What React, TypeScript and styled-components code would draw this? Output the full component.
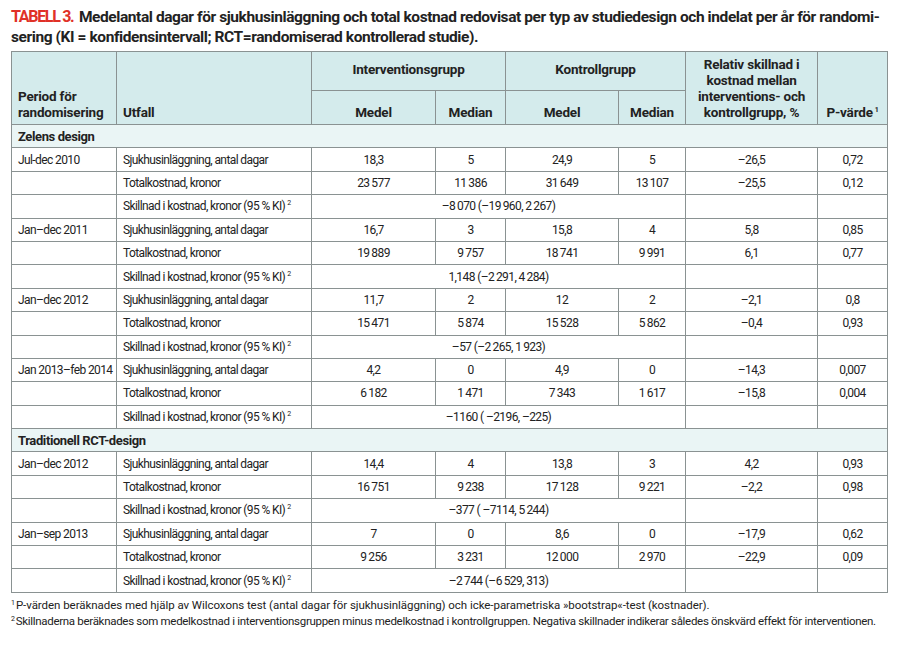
import React from 'react';
import styled, { createGlobalStyle } from 'styled-components';

const GlobalStyle = createGlobalStyle`
  body {
    margin: 0;
    background: #ffffff;
    font-family: Roboto, "Liberation Sans", sans-serif;
    color: #222;
  }
`;

const Page = styled("div")({
  width: 900,
  height: 652,
  padding: "7px 13px 0 11px",
  boxSizing: "border-box",
  overflow: "hidden",
});

const Caption = styled("div")({
  fontSize: 15.5,
  lineHeight: "20px",
  fontWeight: 700,
  letterSpacing: -0.42,
  color: "#222",
});

const CaptionLine = styled("div")({
  whiteSpace: "nowrap",
});

const Label = styled("span")({
  color: "#e03127",
  fontSize: 16,
  fontWeight: 700,
  letterSpacing: -1.3,
  marginRight: 2,
});

const Table = styled("table")({
  marginTop: 4,
  width: 876,
  borderCollapse: "collapse",
  tableLayout: "fixed",
  fontSize: 12,
  letterSpacing: -0.6,
  "& td, & th": {
    border: "1px solid #8a9292",
  },
});

const HeadCell = styled("th")<{ $align?: "left" | "center"; $valign?: "bottom" | "middle" }>(
  ({ $align = "center", $valign = "bottom" }) => ({
    background: "#d4ebec",
    fontWeight: 700,
    fontSize: 13.5,
    lineHeight: "16px",
    textAlign: $align,
    verticalAlign: $valign,
    padding: "0 6px 4px",
    letterSpacing: -0.2,
  })
);

const SectionCell = styled("td")({
  background: "#eaf5f5",
  fontWeight: 700,
  fontSize: 13,
  height: 22.4,
  padding: "0 6px",
  letterSpacing: -0.4,
});

const Cell = styled("td")<{ $align?: "left" | "center" }>(({ $align = "center" }) => ({
  height: 22.4,
  padding: "0 6px",
  textAlign: $align,
  whiteSpace: "nowrap",
}));

const Sup = styled("sup")({
  fontSize: 7,
  verticalAlign: 5,
  marginLeft: 2,
});

const Notes = styled("div")({
  marginTop: 3,
  fontSize: 11.5,
  lineHeight: "14px",
  color: "#222",
});

const Note = styled("div")<{ $spacing: number }>(({ $spacing }) => ({
  letterSpacing: $spacing,
  whiteSpace: "nowrap",
}));

const NoteSup = styled("sup")({
  fontSize: 7,
  verticalAlign: 4,
  marginRight: 1,
});

type Group = {
  period: string;
  days: string[];
  cost: string[];
  diff: string;
};

const zelens: Group[] = [
  {
    period: "Jul-dec 2010",
    days: ["18,3", "5", "24,9", "5", "–26,5", "0,72"],
    cost: ["23\u2009577", "11\u2009386", "31\u2009649", "13\u2009107", "–25,5", "0,12"],
    diff: "–8\u2009070 (–19\u2009960, 2\u2009267)",
  },
  {
    period: "Jan–dec 2011",
    days: ["16,7", "3", "15,8", "4", "5,8", "0,85"],
    cost: ["19\u2009889", "9\u2009757", "18\u2009741", "9\u2009991", "6,1", "0,77"],
    diff: "1,148 (–2\u2009291, 4\u2009284)",
  },
  {
    period: "Jan–dec 2012",
    days: ["11,7", "2", "12", "2", "–2,1", "0,8"],
    cost: ["15\u2009471", "5\u2009874", "15\u2009528", "5\u2009862", "–0,4", "0,93"],
    diff: "–57 (–2\u2009265, 1\u2009923)",
  },
  {
    period: "Jan 2013–feb 2014",
    days: ["4,2", "0", "4,9", "0", "–14,3", "0,007"],
    cost: ["6\u2009182", "1\u2009471", "7\u2009343", "1\u2009617", "–15,8", "0,004"],
    diff: "–1160 ( –2196, –225)",
  },
];

const traditional: Group[] = [
  {
    period: "Jan–dec 2012",
    days: ["14,4", "4", "13,8", "3", "4,2", "0,93"],
    cost: ["16\u2009751", "9\u2009238", "17\u2009128", "9\u2009221", "–2,2", "0,98"],
    diff: "–377 ( –7114, 5\u2009244)",
  },
  {
    period: "Jan–sep 2013",
    days: ["7", "0", "8,6", "0", "–17,9", "0,62"],
    cost: ["9\u2009256", "3\u2009231", "12\u2009000", "2\u2009970", "–22,9", "0,09"],
    diff: "–2\u2009744 (–6\u2009529, 313)",
  },
];

const GroupRows: React.FC<{ group: Group }> = ({ group }) => (
  <>
    <tr>
      <Cell $align="left">{group.period}</Cell>
      <Cell $align="left">Sjukhusinläggning, antal dagar</Cell>
      {group.days.map((v, i) => (
        <Cell key={i}>{v}</Cell>
      ))}
    </tr>
    <tr>
      <Cell />
      <Cell $align="left">Totalkostnad, kronor</Cell>
      {group.cost.map((v, i) => (
        <Cell key={i}>{v}</Cell>
      ))}
    </tr>
    <tr>
      <Cell />
      <Cell $align="left">
        Skillnad i kostnad, kronor (95 % KI)<Sup>2</Sup>
      </Cell>
      <Cell colSpan={4}>{group.diff}</Cell>
      <Cell />
      <Cell />
    </tr>
  </>
);

const App: React.FC = () => (
  <Page>
    <GlobalStyle />
    <Caption>
      <CaptionLine>
        <Label>TABELL 3.</Label> Medelantal dagar för sjukhusinläggning och total kostnad redovisat per typ av
        studiedesign och indelat per år för randomi-
      </CaptionLine>
      <CaptionLine>sering (KI = konfidensintervall; RCT=randomiserad kontrollerad studie).</CaptionLine>
    </Caption>
    <Table>
      <colgroup>
        <col style={{ width: 105 }} />
        <col style={{ width: 195 }} />
        <col style={{ width: 124 }} />
        <col style={{ width: 70 }} />
        <col style={{ width: 113 }} />
        <col style={{ width: 67 }} />
        <col style={{ width: 132 }} />
        <col style={{ width: 70 }} />
      </colgroup>
      <thead>
        <tr style={{ height: 39 }}>
          <HeadCell rowSpan={2} $align="left">
            Period för
            <br />
            randomisering
          </HeadCell>
          <HeadCell rowSpan={2} $align="left">
            Utfall
          </HeadCell>
          <HeadCell colSpan={2} $valign="middle">
            Interventionsgrupp
          </HeadCell>
          <HeadCell colSpan={2} $valign="middle">
            Kontrollgrupp
          </HeadCell>
          <HeadCell rowSpan={2}>
            Relativ skillnad i
            <br />
            kostnad mellan
            <br />
            interventions- och
            <br />
            kontrollgrupp, %
          </HeadCell>
          <HeadCell rowSpan={2}>
            P-värde<Sup>1</Sup>
          </HeadCell>
        </tr>
        <tr style={{ height: 34 }}>
          <HeadCell>Medel</HeadCell>
          <HeadCell>Median</HeadCell>
          <HeadCell>Medel</HeadCell>
          <HeadCell>Median</HeadCell>
        </tr>
      </thead>
      <tbody>
        <tr>
          <SectionCell colSpan={8}>Zelens design</SectionCell>
        </tr>
        {zelens.map((g) => (
          <GroupRows key={g.period} group={g} />
        ))}
        <tr>
          <SectionCell colSpan={8}>Traditionell RCT-design</SectionCell>
        </tr>
        {traditional.map((g) => (
          <GroupRows key={g.period} group={g} />
        ))}
      </tbody>
    </Table>
    <Notes>
      <Note $spacing={-0.05}>
        <NoteSup>1</NoteSup>P-värden beräknades med hjälp av Wilcoxons test (antal dagar för sjukhusinläggning) och
        icke-parametriska »bootstrap«-test (kostnader).
      </Note>
      <Note $spacing={-0.3}>
        <NoteSup>2</NoteSup>Skillnaderna beräknades som medelkostnad i interventionsgruppen minus medelkostnad i
        kontrollgruppen. Negativa skillnader indikerar således önskvärd effekt för interventionen.
      </Note>
    </Notes>
  </Page>
);

export default App;
